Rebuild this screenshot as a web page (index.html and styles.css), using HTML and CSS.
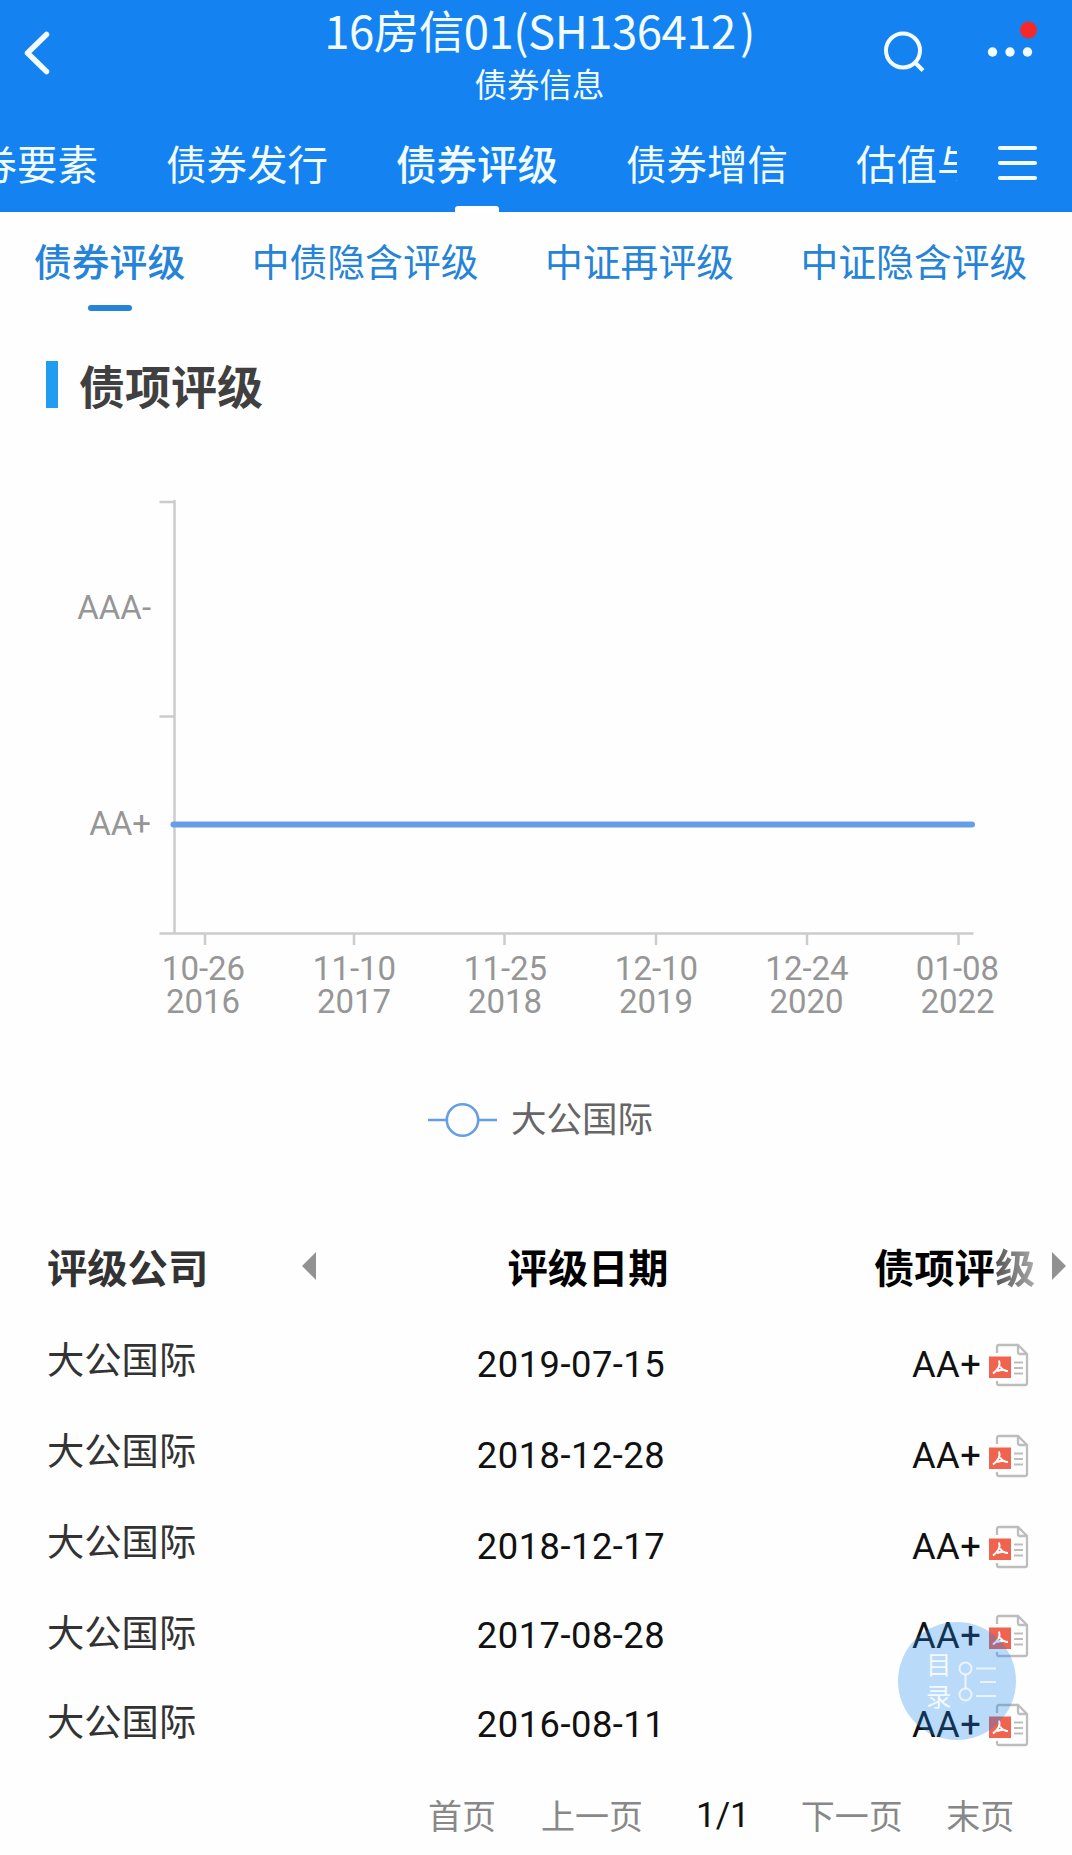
FILE: index.html
```html
<!DOCTYPE html>
<html lang="zh-CN">
<head>
    <meta charset="UTF-8">
    <meta name="viewport" content="width=device-width, initial-scale=1.0">
    <title>16房信01(SH136412)</title>
    <link rel="stylesheet" href="styles.css">
</head>
<body>
    <!-- Shared icon -->
    <svg class="sprite">
        <symbol id="pdf" viewBox="0 0 42 44">
            <path d="M9 10V4q0-2 2-2h19l9 9v29q0 2-2 2H11q-2 0-2-2v-2M30 2v7q0 2 2 2h7" fill="none" stroke="#bdbdbd" stroke-width="2.300"/>
            <path d="M26 19.500h9M26 25h9M26 30.500h9" stroke="#bdbdbd" stroke-width="2"/>
            <rect x="1" y="13.500" width="22" height="21.500" fill="#f0634f"/>
            <path d="M11 17.500q2.500 6.500-6 13M12 23.500q3 4.500 8 4.500M9 28q4-1.500 8-1" fill="none" stroke="#fff" stroke-width="2"/>
        </symbol>
    </svg>

    <header class="header">
        <div class="title-bar">
            <svg class="back" viewBox="0 0 30 48"><path d="M24.500 5.500L5.500 24l19 18.500" /></svg>
            <div class="title">
                <h1>16房信01(SH136412<span class="paren">)</span></h1>
                <p>债券信息</p>
            </div>
            <div class="actions">
                <svg class="search" viewBox="0 0 44 44"><circle cx="20" cy="19.500" r="17"/><path d="M32 31.500l8 8"/></svg>
                <svg class="more" viewBox="0 0 52 48">
                    <circle cx="7.500" cy="34" r="4.700"/><circle cx="25" cy="34" r="4.700"/><circle cx="42.500" cy="34" r="4.700"/>
                    <circle class="dot" cx="43.500" cy="12" r="8.500"/>
                </svg>
            </div>
        </div>
        <div class="nav">
            <nav class="tabs">
                <a>债券要素</a>
                <a>债券发行</a>
                <a class="active">债券评级</a>
                <a>债券增信</a>
                <a>估值与分析</a>
            </nav>
            <div class="menu"><i></i><i></i><i></i></div>
        </div>
    </header>

    <nav class="sub-tabs">
        <a class="active">债券评级</a>
        <a>中债隐含评级</a>
        <a>中证再评级</a>
        <a>中证隐含评级</a>
    </nav>

    <h2 class="section-title">债项评级</h2>

    <svg class="chart" viewBox="0 0 1072 560">
        <g class="axis">
            <path d="M174.500 20v433.500M159.500 22h15M159.500 236.500h15M159.500 453.500h814"/>
            <path d="M205 454v11M354 454v11M504.500 454v11M656 454v11M807 454v11M958.500 454v11"/>
        </g>
        <path class="series" d="M173.500 344.500h798.500"/>
        <g class="y-label">
            <text x="151" y="138.500">AAA-</text>
            <text x="151" y="354.500">AA+</text>
        </g>
        <g class="x-label">
            <text x="203.500" y="500">10-26</text><text x="203" y="533">2016</text>
            <text x="354.500" y="500">11-10</text><text x="354" y="533">2017</text>
            <text x="505.500" y="500">11-25</text><text x="505" y="533">2018</text>
            <text x="656.500" y="500">12-10</text><text x="656" y="533">2019</text>
            <text x="807" y="500">12-24</text><text x="806.500" y="533">2020</text>
            <text x="957.500" y="500">01-08</text><text x="957.500" y="533">2022</text>
        </g>
    </svg>

    <div class="legend">
        <svg viewBox="0 0 70 38"><path d="M0 19h19M51 19h18"/><circle cx="34.500" cy="19" r="15.700"/></svg>
        <span>大公国际</span>
    </div>

    <div class="ratings">
        <div class="company">
            <div class="row head">评级公司<svg class="arrow" viewBox="0 0 14 28"><path d="M14 0v28L0 14z"/></svg></div>
            <div class="row">大公国际</div>
            <div class="row">大公国际</div>
            <div class="row">大公国际</div>
            <div class="row">大公国际</div>
            <div class="row">大公国际</div>
        </div>
        <div class="detail">
            <div class="row head">
                <span class="date">评级日期</span>
                <span class="grade">债项评<span class="fade">级</span></span>
                <svg class="arrow" viewBox="0 0 14 28"><path d="M0 0v28l14-14z"/></svg>
            </div>
            <div class="row"><span class="date">2019-07-15</span><span class="grade">AA+<svg class="pdf"><use href="#pdf"/></svg></span></div>
            <div class="row"><span class="date">2018-12-28</span><span class="grade">AA+<svg class="pdf"><use href="#pdf"/></svg></span></div>
            <div class="row"><span class="date">2018-12-17</span><span class="grade">AA+<svg class="pdf"><use href="#pdf"/></svg></span></div>
            <div class="row"><span class="date">2017-08-28</span><span class="grade">AA+<svg class="pdf"><use href="#pdf"/></svg></span></div>
            <div class="row"><span class="date">2016-08-11</span><span class="grade">AA+<svg class="pdf"><use href="#pdf"/></svg></span></div>
        </div>
    </div>

    <div class="pager">
        <a>首页</a>
        <a>上一页</a>
        <span>1/1</span>
        <a>下一页</a>
        <a>末页</a>
    </div>

    <!-- Floating catalog button -->
    <div class="catalog">
        <span>目<br>录</span>
        <svg viewBox="0 0 38 42">
            <circle cx="7.500" cy="7.500" r="6"/><circle cx="7.500" cy="33.500" r="6"/>
            <path d="M7.500 13.500v14M18 7.500h20M22 21h16M18 35h20"/>
        </svg>
    </div>
</body>
</html>
```
FILE: styles.css
```css
:root {
    --primary: #1482f0;
    --link: #2583d8;
    --axis: #ccc;
    --line: #669de8;
}

* {
    margin: 0;
    padding: 0;
    box-sizing: border-box;
}

body {
    position: relative;
    width: 1072px;
    height: 1855px;
    overflow: hidden;
    background: #fefefe;
    font-family: Roboto, "Noto Sans CJK SC", sans-serif;
    white-space: nowrap;
}

svg {
    display: block;
    flex: none;
}

.sprite {
    position: absolute;
    width: 0;
    height: 0;
}

/* Header */
.header {
    height: 212px;
    background: var(--primary);
    color: #f2fcff;
    font-family: "Noto Sans CJK SC", sans-serif;
}

.title-bar {
    display: grid;
    grid-template-columns: 200px 1fr 200px;
    height: 115px;
}

.back {
    width: 30px;
    height: 48px;
    margin: 29px 0 0 22px;
    fill: none;
    stroke: #f2fcff;
    stroke-width: 5.5;
    stroke-linecap: round;
    stroke-linejoin: round;
}

.title {
    text-align: center;
    padding-left: 7px;
}

.title h1 {
    font-size: 45.5px;
    font-weight: 400;
    letter-spacing: -0.5px;
    line-height: 58px;
}

.title .paren {
    margin-left: 4px;
}

.title p {
    font-size: 32.5px;
    line-height: 44px;
    padding-top: 3px;
}

.actions {
    display: flex;
    gap: 58px;
    padding: 18px 0 0 11px;
}

.search {
    width: 44px;
    height: 44px;
    margin-top: 13px;
    fill: none;
    stroke: #f2fcff;
    stroke-width: 4;
}

.more {
    width: 52px;
    height: 48px;
    fill: #f2fcff;
}

.more .dot {
    fill: #f42a2a;
}

.nav {
    display: flex;
    height: 97px;
}

.tabs {
    display: flex;
    gap: 68px;
    width: 957px;
    overflow: hidden;
    font-size: 40.5px;
    line-height: 96px;
}

.tabs a {
    flex: none;
}

.tabs a:first-child {
    margin-left: -64px;
}

.tabs .active,
.sub-tabs .active {
    font-weight: 500;
    display: flex;
    flex-direction: column;
    align-items: center;
}

.tabs .active::after {
    content: "";
    width: 44px;
    height: 6px;
    margin-top: -5px;
    border-radius: 3px 3px 0 0;
    background: #fff;
}

.menu {
    display: flex;
    flex-direction: column;
    gap: 11.5px;
    width: 39px;
    margin: 31px 0 0 41px;
}

.menu i {
    height: 3.6px;
    border-radius: 2px;
    background: #f2fcff;
}

.sub-tabs {
    display: flex;
    gap: 66.5px;
    height: 120px;
    padding-left: 34px;
    color: var(--link);
    font-size: 37.8px;
    line-height: 102px;
}

.sub-tabs .active::after {
    content: "";
    width: 44px;
    height: 6px;
    margin-top: -9px;
    border-radius: 3px;
    background: var(--link);
}

.section-title {
    display: flex;
    align-items: center;
    gap: 21px;
    height: 68px;
    margin: 18px 0 0 46px;
    color: #404040;
    font-size: 46px;
}

.section-title::before {
    content: "";
    width: 12px;
    height: 47px;
    background: #209cf0;
}

/* Chart */
.chart {
    width: 1072px;
    height: 560px;
    margin-top: 62px;
    font-size: 33px;
}

.axis {
    fill: none;
    stroke: var(--axis);
    stroke-width: 2.5;
}

.series {
    stroke: var(--line);
    stroke-width: 6;
    stroke-linecap: round;
}

.chart text {
    fill: #969696;
}

.y-label {
    text-anchor: end;
}

.x-label {
    text-anchor: middle;
}

.legend {
    display: flex;
    align-items: center;
    gap: 13px;
    height: 60px;
    margin: 48px 0 0 428px;
    color: #666;
    font-size: 35.5px;
}

.legend svg {
    width: 70px;
    height: 38px;
    margin-top: 4px;
    fill: #fff;
    stroke: var(--line);
    stroke-width: 2.6;
}

.legend span {
    margin-top: -4px;
}

/* Ratings table */
.ratings {
    display: flex;
    margin-top: 70px;
    height: 568px;
}

.company {
    width: 400px;
    padding-left: 47px;
    color: #333;
    font-size: 37.3px;
}

.detail {
    width: 672px;
    color: #111;
    font-size: 36.3px;
}

.row {
    display: flex;
    align-items: center;
    height: 91px;
}

.company .row:last-child {
    height: 88px;
}

.detail .row:nth-child(2) {
    height: 98px;
    padding-top: 7px;
}

.detail .row:nth-child(5) {
    height: 87px;
}

.row.head {
    height: 94px;
    font-size: 40.3px;
    font-weight: 700;
}

.detail .head {
    color: #000;
}

.arrow {
    width: 14px;
    height: 28px;
    margin-top: 2px;
    fill: #929292;
}

.company .arrow {
    margin-left: 94px;
}

.detail .arrow {
    margin-left: 17px;
}

.date {
    width: 342px;
    text-align: center;
    letter-spacing: 0.5px;
}

.head .date {
    width: 376px;
    letter-spacing: 0;
}

.grade {
    display: flex;
    align-items: center;
    margin-left: 170px;
    letter-spacing: 0.4px;
}

.head .grade {
    margin-left: 98px;
    letter-spacing: 0;
}

.fade {
    background: linear-gradient(90deg, #555, #aaa);
    -webkit-background-clip: text;
    background-clip: text;
    color: transparent;
}

.pdf {
    width: 42px;
    height: 44px;
    margin-left: 7px;
}

.pager {
    display: flex;
    align-items: center;
    height: 60px;
    margin: -2px 0 0 428px;
    color: #888;
    font-size: 34px;
}

.pager a + a {
    margin-left: 45px;
}

.pager span {
    margin: 0 51px 0 53px;
    padding-top: 3px;
    color: #111;
    font-size: 35px;
}

.pager span + a + a {
    margin-left: 43.5px;
}

.catalog {
    position: absolute;
    left: 898px;
    top: 1622px;
    display: flex;
    align-items: center;
    gap: 6px;
    width: 118px;
    height: 118px;
    padding-left: 28px;
    border-radius: 50%;
    background: rgba(20, 130, 240, 0.29);
    color: rgba(255, 255, 255, 0.85);
    font-size: 25.5px;
    line-height: 32px;
}

.catalog svg {
    width: 38px;
    height: 42px;
    margin-top: 2px;
    fill: none;
    stroke: rgba(255, 255, 255, 0.7);
    stroke-width: 2;
}
```
